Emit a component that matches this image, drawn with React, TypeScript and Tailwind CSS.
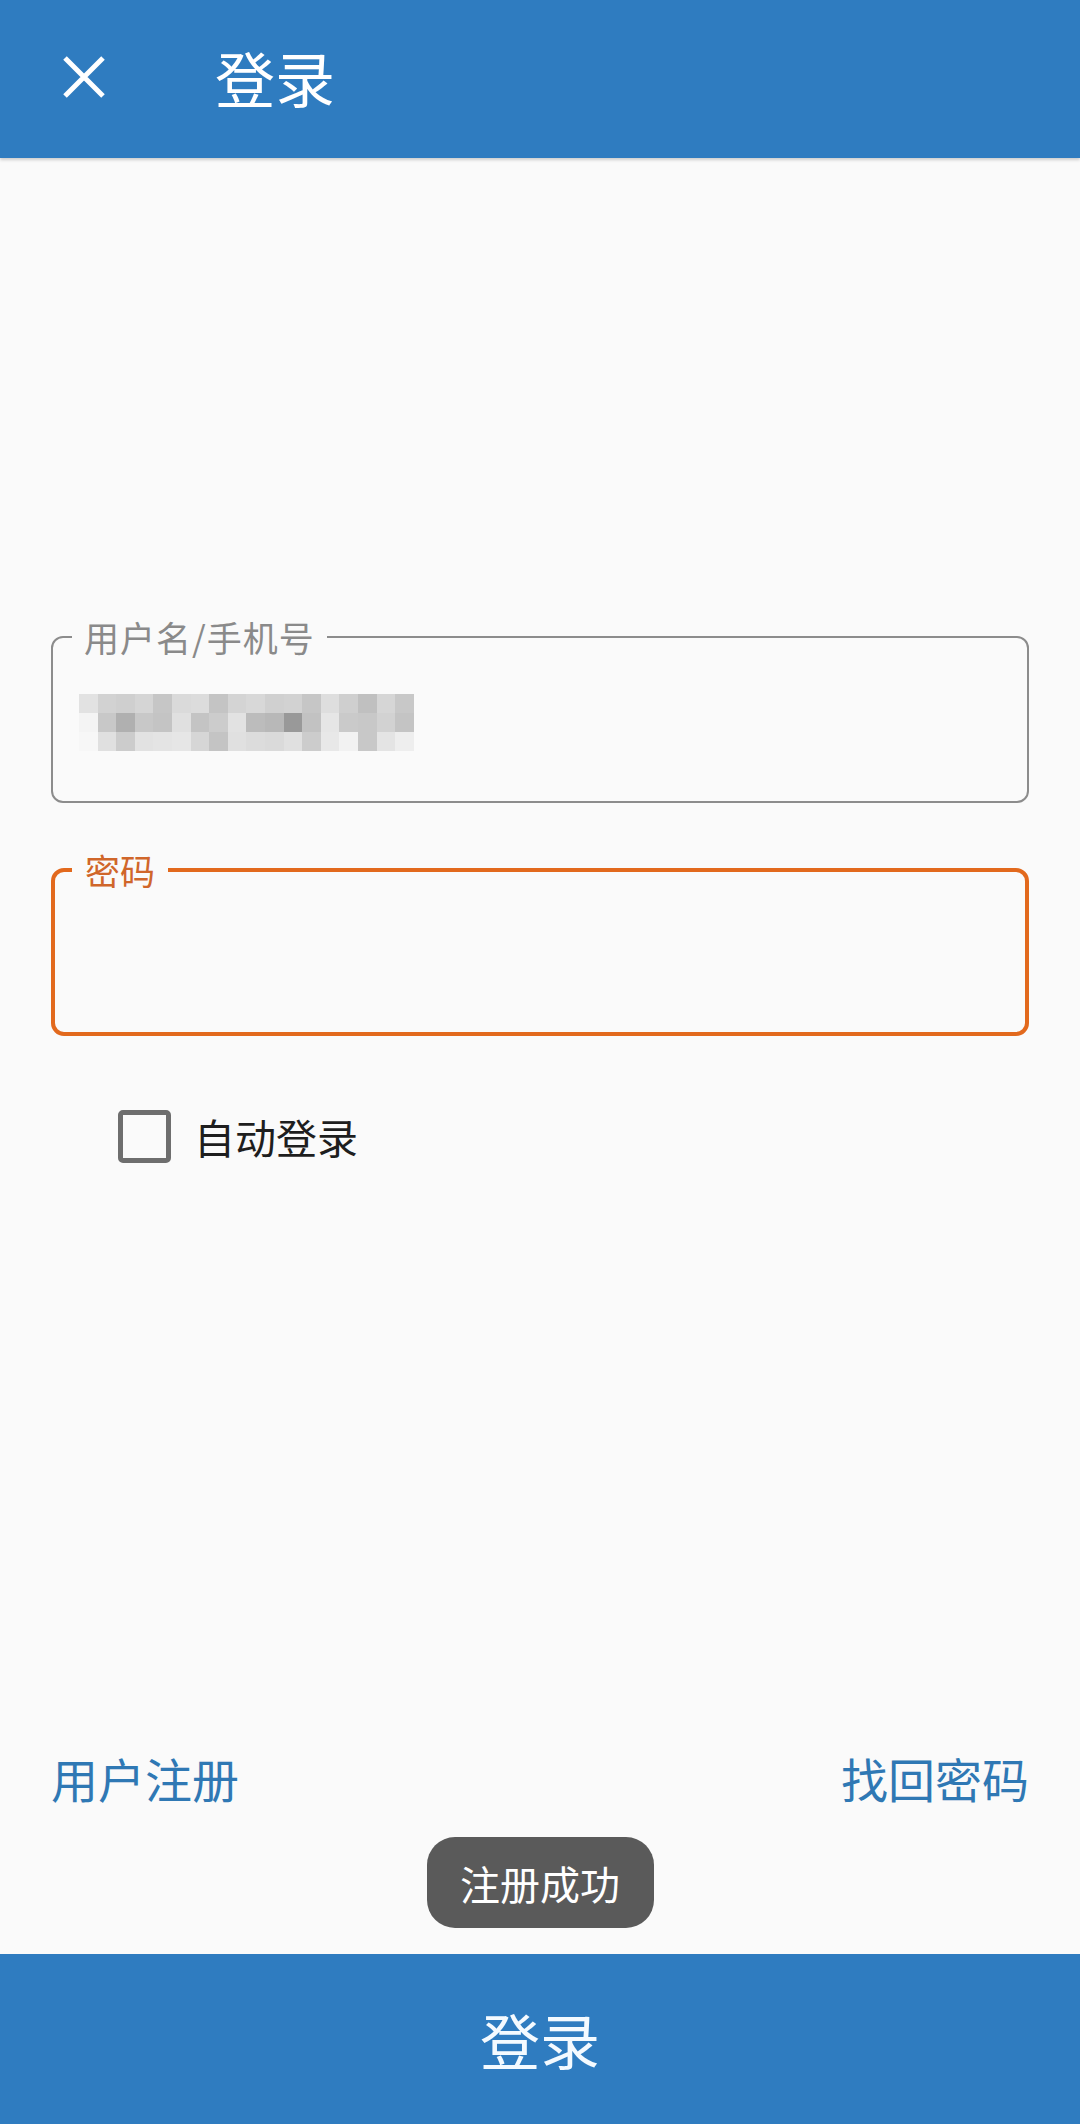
const mosaic: string[][] = [
  ['#e2e2e2', '#d2d2d2', '#cfcfcf', '#d5d5d5', '#c6c6c6', '#dadada', '#dcdcdc', '#c4c4c4', '#d4d4d4', '#d8d8d8', '#d0d0d0', '#d2d2d2', '#c6c6c6', '#dedede', '#cfcfcf', '#c0c0c0', '#d6d6d6', '#c8c8c8'],
  ['#f4f4f4', '#c8c8c8', '#b0b0b0', '#c8c8c8', '#c4c4c4', '#e0e0e0', '#c4c4c4', '#cccccc', '#e2e2e2', '#bcbcbc', '#b8b8b8', '#999999', '#c2c2c2', '#e6e6e6', '#cacaca', '#c8c8c8', '#d2d2d2', '#c4c4c4'],
  ['#f7f7f7', '#e0e0e0', '#cccccc', '#e2e2e2', '#e4e4e4', '#e6e6e6', '#d6d6d6', '#c4c4c4', '#e0e0e0', '#dcdcdc', '#dadada', '#e0e0e0', '#cccccc', '#e8e8e8', '#f2f2f2', '#c8c8c8', '#e4e4e4', '#eeeeee'],
]

const CloseIcon = () => (
  <svg width="44" height="44" viewBox="0 0 44 44" fill="none">
    <path d="M3 3L41 41M41 3L3 41" stroke="white" strokeWidth="5" />
  </svg>
)

const App = () => {
  return (
    <div className="w-[1080px] h-[2124px] flex flex-col bg-[#fafafa] font-['Noto_Sans_CJK_SC','Noto_Sans',sans-serif]">
      {/* header */}
      <header className="h-[158px] shrink-0 bg-[#2f7cc0] flex items-center px-[62px] pb-[4px] shadow-[0_2px_3px_rgba(0,0,0,0.18)]">
        <CloseIcon />
        <h1 className="ml-[109px] text-[60px] leading-none text-white">登录</h1>
      </header>

      <main className="flex-1 flex flex-col px-[51px]">
        {/* username */}
        <fieldset className="mt-[459px] h-[186px] border-2 border-[#8c8c8c] rounded-[12px]">
          <legend className="ml-[19px] px-[12px] text-[35px] tracking-[1px] leading-[40px] text-[#8a8a8a]">用户名/手机号</legend>
          <div className="mt-[37px] ml-[26px] flex flex-col blur-[0.6px]">
            {mosaic.map((row, i) => (
              <div key={i} className="flex">
                {row.map((c, j) => (
                  <div key={j} className="w-[18.6px] h-[19px]" style={{ backgroundColor: c }} />
                ))}
              </div>
            ))}
          </div>
        </fieldset>

        {/* password */}
        <fieldset className="mt-[47px] h-[186px] border-4 border-[#e2691d] rounded-[13px]">
          <legend className="ml-[17px] px-[13px] text-[35px] leading-[40px] text-[#d0662a]">密码</legend>
        </fieldset>

        {/* auto login */}
        <label className="mt-[74px] ml-[67px] flex items-center">
          <span className="w-[53px] h-[53px] border-[5px] border-[#6e6e6e] rounded-[5px]" />
          <span className="ml-[23px] text-[41px] leading-none text-[#1e1e1e]">自动登录</span>
        </label>

        <div className="flex-1" />

        <div className="flex justify-between items-center text-[47px] leading-[60px] text-[#2f78b4]">
          <span>用户注册</span>
          <span>找回密码</span>
        </div>

        <div className="mt-[29px] mb-[26px] self-center h-[91px] w-[227px] rounded-[28px] bg-[#5a5a5a] flex items-center justify-center text-[40px] text-white">
          注册成功
        </div>
      </main>

      <button className="h-[170px] shrink-0 bg-[#2f7cc0] text-[60px] text-[#f4faff] flex items-center justify-center">
        登录
      </button>
    </div>
  )
}

export default App
